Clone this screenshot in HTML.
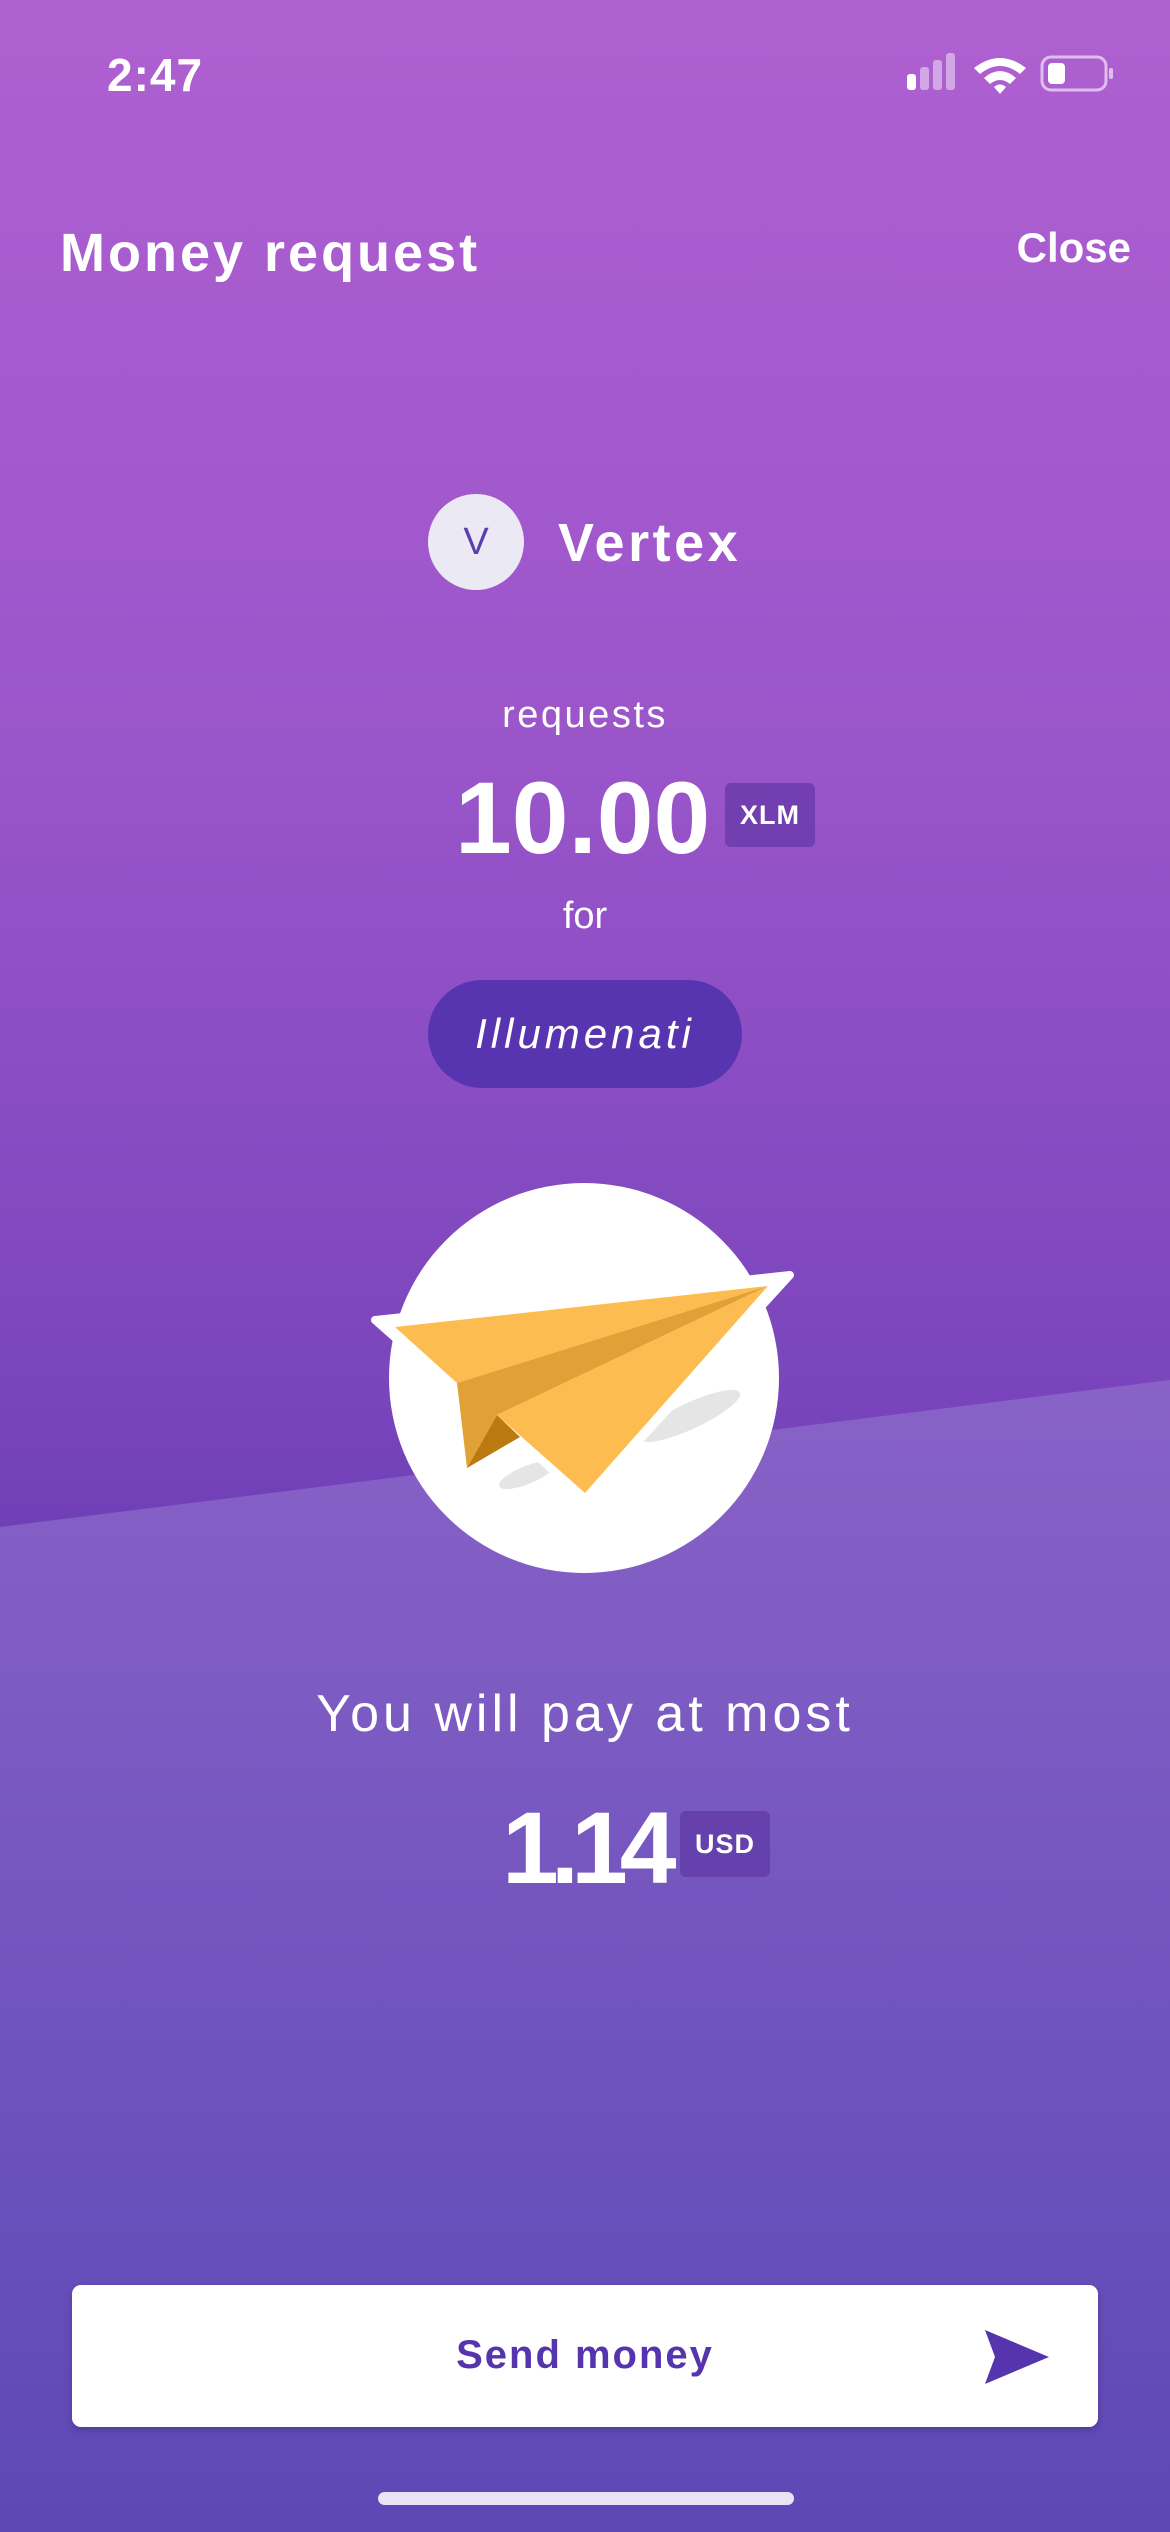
<!DOCTYPE html>
<html><head><meta charset="utf-8">
<style>
*{margin:0;padding:0;box-sizing:border-box}
body{width:1170px;height:2532px;position:relative;overflow:hidden;font-family:"Liberation Sans",sans-serif;color:#fff;
background:linear-gradient(180deg,#af60d1 0%,#9a55ca 30%,#7a45bc 55%,#6c3eb5 62%);}
.abs{position:absolute}
.c{position:absolute;left:0;width:1170px;text-align:center}
.badge{position:absolute;background:rgba(90,50,160,0.6);border-radius:6px;font-weight:bold;font-size:27px;text-align:center;letter-spacing:1px}
</style></head><body>
<svg class="abs" style="left:0;top:0" width="1170" height="2532">
<defs><linearGradient id="g" x1="0" y1="0" x2="0" y2="1"><stop offset="0" stop-color="#8862c7"/><stop offset="1" stop-color="#5d48b6"/></linearGradient></defs>
<polygon points="0,1527 1170,1380 1170,2532 0,2532" fill="url(#g)"/>
</svg>
<div class="abs" style="left:107px;top:48px;font-size:46px;font-weight:bold;letter-spacing:1px">2:47</div>
<svg class="abs" style="left:900px;top:52px" width="215" height="45">
<rect x="7" y="22" width="9" height="16" rx="3" fill="#fff"/>
<rect x="20" y="15" width="9" height="23" rx="3" fill="rgba(255,255,255,.45)"/>
<rect x="33" y="8" width="9" height="30" rx="3" fill="rgba(255,255,255,.45)"/>
<rect x="46" y="1" width="9" height="37" rx="3" fill="rgba(255,255,255,.45)"/>
<path d="M74 16 Q100 -4 126 16 L120 22 Q100 6 80 22Z M84 26 Q100 12 116 26 L110 32 Q100 24 90 32Z M94 35 Q100 30 106 35 L100 42Z" fill="#fff"/>
<rect x="142" y="5" width="64" height="33" rx="9" fill="none" stroke="rgba(255,255,255,.6)" stroke-width="3"/>
<rect x="148" y="11" width="17" height="21" rx="4" fill="#fff"/>
<rect x="209" y="16" width="4" height="11" rx="2" fill="rgba(255,255,255,.6)"/>
</svg>
<div class="abs" style="left:60px;top:222px;font-size:54px;font-weight:bold;letter-spacing:3px">Money request</div>
<div class="abs" style="right:39px;top:224px;font-size:42px;font-weight:bold">Close</div>
<div class="abs" style="left:428px;top:494px;width:96px;height:96px;border-radius:50%;background:#ebeaf4;color:#5a3fb0;font-size:38px;text-align:center;line-height:96px">V</div>
<div class="abs" style="left:558px;top:512px;font-size:54px;font-weight:bold;letter-spacing:3.5px">Vertex</div>
<div class="c" style="top:694px;font-size:38px;letter-spacing:2.5px">requests</div>
<div class="abs" style="left:455px;top:760px;font-size:102px;font-weight:bold;letter-spacing:0px">10.00</div>
<div class="badge" style="left:725px;top:783px;width:90px;height:64px;line-height:64px">XLM</div>
<div class="c" style="top:895px;font-size:38px">for</div>
<div class="abs" style="left:428px;top:980px;width:314px;height:108px;border-radius:54px;background:#5735b0;font-size:42px;font-style:italic;text-align:center;line-height:108px;letter-spacing:4px">Illumenati</div>
<div class="abs" style="left:389px;top:1183px;width:390px;height:390px;border-radius:50%;background:#fff"></div>
<svg class="abs" style="left:0;top:0" width="1170" height="1600">
<ellipse cx="690" cy="1416" rx="55" ry="13" fill="#e5e5e5" transform="rotate(-25 690 1416)"/>
<ellipse cx="527" cy="1475" rx="30" ry="9" fill="#e5e5e5" transform="rotate(-22 527 1475)"/>
<polygon points="375,1320 790,1275 585,1500 520,1440 462,1475 452,1388" fill="#fff" stroke="#fff" stroke-width="8" stroke-linejoin="round"/>
<polygon points="395,1327 768,1286 457,1383" fill="#fcbc50"/>
<polygon points="457,1383 768,1286 497,1415 467,1468" fill="#e0a136"/>
<polygon points="497,1415 520,1437 467,1468" fill="#bb7a10"/>
<polygon points="497,1415 768,1286 585,1493" fill="#fcbc50"/>
</svg>
<div class="c" style="top:1684px;font-size:52px;letter-spacing:4px">You will pay at most</div>
<div class="abs" style="left:502px;top:1790px;font-size:102px;font-weight:bold;letter-spacing:-8px">1.14</div>
<div class="badge" style="left:680px;top:1811px;width:90px;height:66px;line-height:66px">USD</div>
<div class="abs" style="left:72px;top:2285px;width:1026px;height:142px;background:#fff;border-radius:9px;box-shadow:0 3px 8px rgba(0,0,0,.2)"></div>
<div class="c" style="top:2333px;font-size:40px;font-weight:bold;color:#5534ae;letter-spacing:2px">Send money</div>
<svg class="abs" style="left:983px;top:2328px" width="68" height="58"><path d="M2 2 L66 29 L2 56 L12 29Z" fill="#5534ae"/></svg>
<div class="abs" style="left:378px;top:2492px;width:416px;height:13px;border-radius:7px;background:#e8e4f5"></div>
</body></html>
